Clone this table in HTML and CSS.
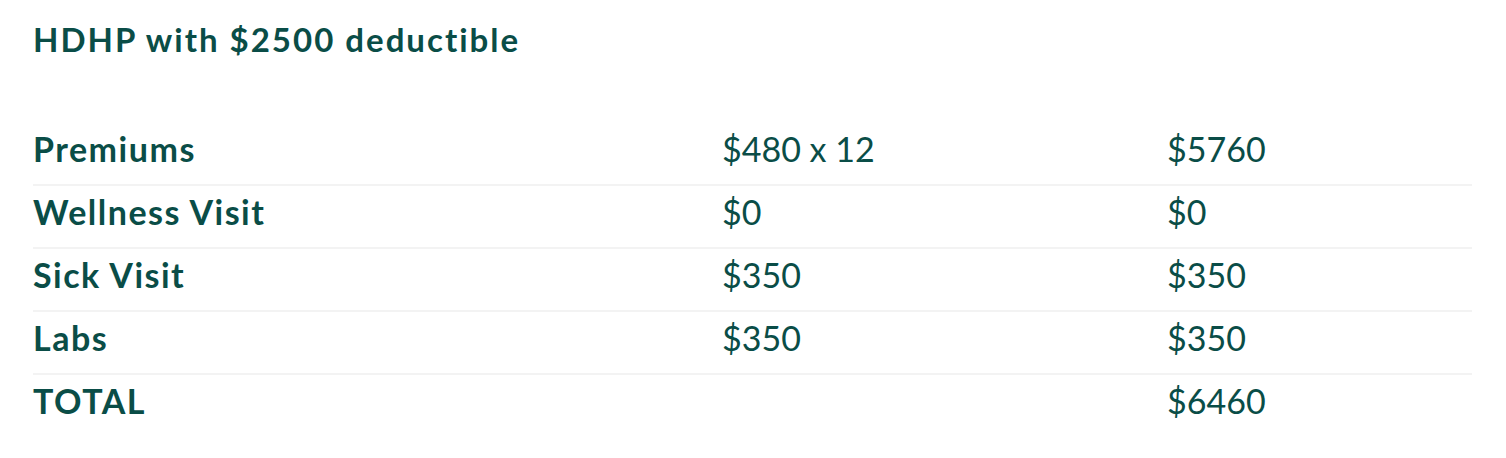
FILE: index.html
```html
<!DOCTYPE html>
<html lang="en">
<head>
<meta charset="utf-8">
<title>HDHP with $2500 deductible</title>
<link rel="stylesheet" href="styles.css">
</head>
<body>
<main class="plan">
  <h2 class="plan-title">HDHP with $2500 deductible</h2>
  <table class="cost-table">
    <colgroup>
      <col class="col-label">
      <col class="col-calc">
      <col class="col-total">
    </colgroup>
    <tbody>
      <tr><th>Premiums</th><td>$480 x 12</td><td>$5760</td></tr>
      <tr><th>Wellness Visit</th><td>$0</td><td>$0</td></tr>
      <tr><th>Sick Visit</th><td>$350</td><td>$350</td></tr>
      <tr><th>Labs</th><td>$350</td><td>$350</td></tr>
      <tr class="total-row"><th>TOTAL</th><td></td><td>$6460</td></tr>
    </tbody>
  </table>
</main>
</body>
</html>
```

FILE: styles.css
```css
html, body {
  margin: 0;
  padding: 0;
  background: #ffffff;
}

body {
  font-family: Lato, "Open Sans", "Liberation Sans", sans-serif;
  color: #0a4d47;
}

.plan {
  padding: 19px 34px 0 33px;
}

.plan-title {
  margin: 0 0 64px 0;
  font-size: 33px;
  line-height: 40px;
  font-weight: 700;
  letter-spacing: 2px;
}

.cost-table {
  width: 1439px;
  border-collapse: collapse;
  table-layout: fixed;
}

.col-label { width: 689px; }
.col-calc { width: 445px; }
.col-total { width: 305px; }

.cost-table th,
.cost-table td {
  padding: 6px 0 15px 0;
  font-size: 34px;
  line-height: 40px;
  text-align: left;
  vertical-align: top;
  border-bottom: 2px solid #f3f3f3;
}

.cost-table th {
  font-weight: 700;
  letter-spacing: 1.5px;
}

.cost-table td {
  font-weight: 400;
}

.cost-table .total-row th,
.cost-table .total-row td {
  border-bottom: none;
}
```
